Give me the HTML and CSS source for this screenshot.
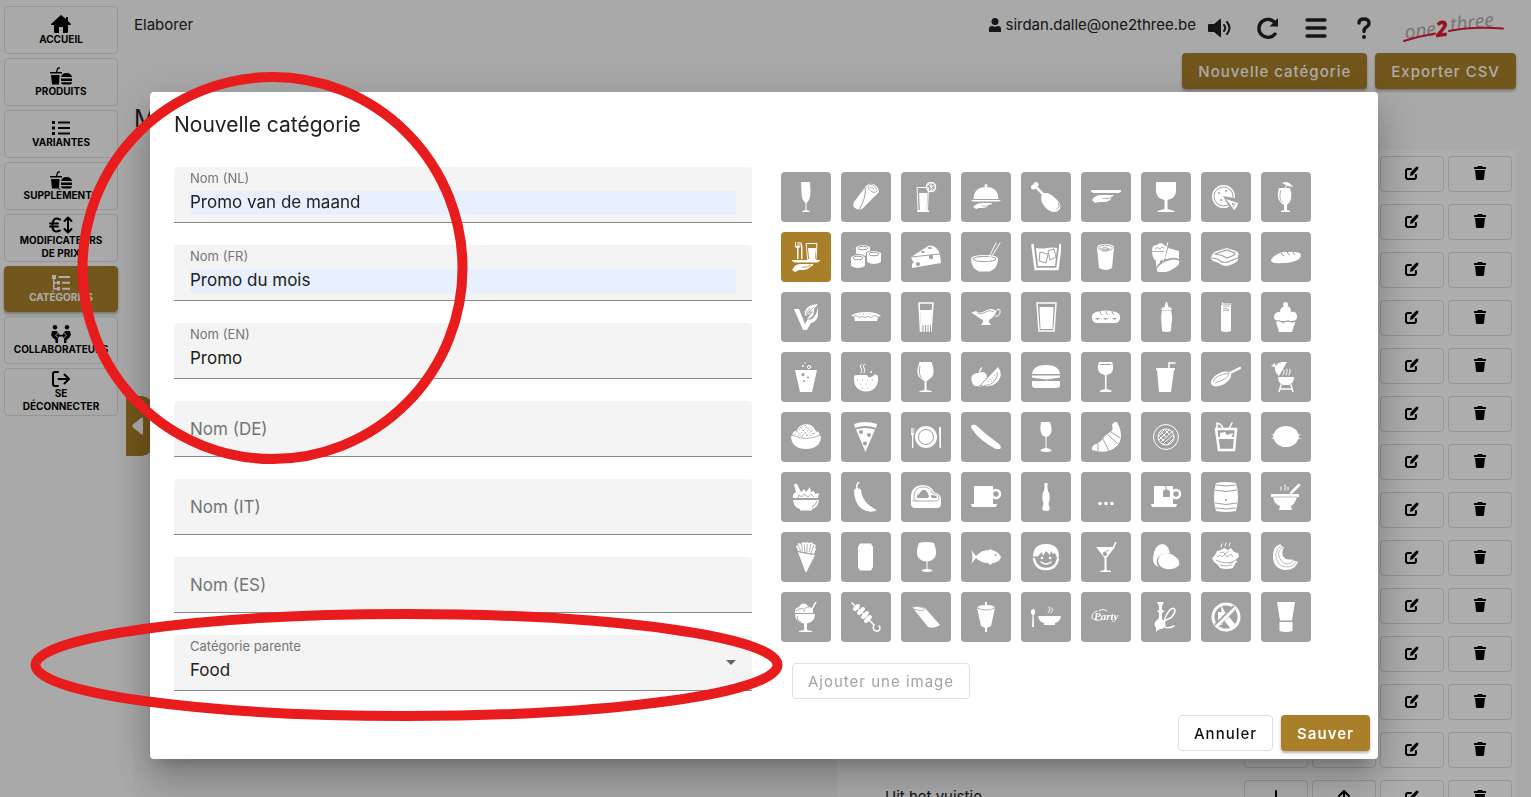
FILE: index.html
```html
<!DOCTYPE html>
<html lang="fr">
<head>
  <meta charset="UTF-8">
  <meta name="viewport" content="width=device-width, initial-scale=1.0">
  <title>Catégories</title>
  <link rel="stylesheet" href="styles.css">
</head>
<body>
  <div class="app">
    <nav class="sidebar">
      <a class="nav-item" href="#">
        <svg width="20" height="18" viewBox="0 0 20 18"><path d="M10 0L0 9q0 1 1 1h2v7q0 1 1 1h4v-6h4v6h4q1 0 1-1v-7h2q1 0 1-1l-3-3V2h-2v2z"/></svg>
        Accueil
      </a>
      <a class="nav-item" href="#">
        <svg width="22" height="18" viewBox="0 0 22 18"><path d="M0 5h6l1-4 3-1v1.300L8 2.200 7.300 5H12v1.500H0zM1 8h8.500L9 17.500H2zM11 10q1-4 5.500-4t5.500 4zM11 11.500h11V14H11zM11 15.300h11q0 2.200-2 2.200h-7q-2 0-2-2.200z"/></svg>
        Produits
      </a>
      <a class="nav-item" href="#">
        <svg width="18" height="16" viewBox="0 0 18 16"><path d="M0 1h3v3H0zM6 1.500h12v2H6zM0 6.500h3v3H0zM6 7h12v2H6zM0 12h3v3H0zM6 12.500h12v2H6z"/></svg>
        Variantes
      </a>
      <a class="nav-item" href="#">
        <svg width="22" height="18" viewBox="0 0 22 18"><path d="M0 5h6l1-4 3-1v1.300L8 2.200 7.300 5H12v1.500H0zM1 8h8.500L9 17.500H2zM11 10q1-4 5.500-4t5.500 4zM11 11.500h11V14H11zM11 15.300h11q0 2.200-2 2.200h-7q-2 0-2-2.200z"/></svg>
        Suppléments
      </a>
      <a class="nav-item" href="#">
        <svg class="line" width="24" height="18" viewBox="0 0 24 18"><path d="M11 3.500Q4 0 3.500 9T11 14.500M1 7.500h8M1 10.500h8M19 2v14M15.500 5L19 1.500 22.500 5M15.500 13l3.500 3.500 3.500-3.500"/></svg>
        Modificateurs<br>de prix
      </a>
      <a class="nav-item active" href="#">
        <svg width="18" height="16" viewBox="0 0 18 16"><path d="M0 0h4v4H2.500v3H5V6h3v3.500H5v-1H2.500V13H5v-1h3v3.500H5v-1H1V4H0zM6.500 1H18v2H6.500zM10 6.800h8v2h-8zM10 12.800h8v2h-8z"/></svg>
        Catégories
      </a>
      <a class="nav-item" href="#">
        <svg width="20" height="18" viewBox="0 0 20 18"><circle cx="4" cy="2.200" r="2.200"/><circle cx="16" cy="2.200" r="2.200"/><path d="M1 6h5l1 2-3 2.500L7 13v5H4.500v-3L2 13 0 10zM19 6h-5l-1 2 3 2.500-3 2.500v5h2.500v-3l2.500-2 2-3zM5 10.500L8 8v1.700h4V8l3 2.500-3 2.500v-1.600H8V13z"/></svg>
        Collaborateurs
      </a>
      <a class="nav-item" href="#">
        <svg class="line" width="18" height="16" viewBox="0 0 18 16"><path d="M6 1H3Q1 1 1 3v10q0 2 2 2h3M6.500 8H17M12.500 3.500L17 8l-4.500 4.500"/></svg>
        Se<br>déconnecter
      </a>
      <button class="sidebar-toggle" type="button" aria-label="Replier le menu">
        <svg width="11" height="18" viewBox="0 0 11 18"><path d="M11 1v16q-1 1-2 0L.5 10q-1-1 0-2L9 1q1-1 2 0z"/></svg>
      </button>
    </nav>

    <main class="main">
      <header class="topbar">
        <span class="page-name">Elaborer</span>
        <span class="user">
          <svg width="12" height="14" viewBox="0 0 12 14"><circle cx="6" cy="3.500" r="3.500"/><path d="M0 14v-3q0-3 3-3 3 1.500 6 0 3 0 3 3v3z"/></svg>
          sirdan.dalle@one2three.be
        </span>
        <button class="icon-btn" type="button" aria-label="Son">
          <svg width="24" height="20" viewBox="0 0 24 20"><path d="M1 6h5l6-5q1-.7 1 .500v17q0 1.200-1 .500L6 14H1q-1 0-1-1V7q0-1 1-1z"/><path class="line" d="M16 7q2.500 3 0 6M19 4q5 6 0 12"/></svg>
        </button>
        <button class="icon-btn" type="button" aria-label="Actualiser">
          <svg width="24" height="24" viewBox="0 0 24 24"><path d="M22 2v8.500h-8.500z"/><path class="line thick" d="M19.500 7.500A9 9 0 1 0 19 18"/></svg>
        </button>
        <button class="icon-btn" type="button" aria-label="Menu">
          <svg width="22" height="20" viewBox="0 0 22 20"><path class="line thick" d="M2 2h18M2 10h18M2 18h18"/></svg>
        </button>
        <button class="icon-btn" type="button" aria-label="Aide">
          <svg width="14" height="22" viewBox="0 0 14 22"><path class="line thick" d="M2 6Q2 2 7 2t5 4q0 2.500-2.500 4T7 14.500"/><circle cx="7" cy="20" r="2"/></svg>
        </button>
        <svg class="logo" width="104" height="40" viewBox="0 0 104 40">
          <g transform="rotate(-7 52 24)">
            <text class="logo-grey" x="3" y="26">one</text>
            <text class="logo-red" x="34" y="28">2</text>
            <text class="logo-grey" x="49" y="24">three</text>
          </g>
          <path d="M2 34Q18 29 33 26.500M47 24Q70 19 101 21.500"/>
        </svg>
      </header>
      <div class="toolbar">
        <button class="btn primary" type="button">Nouvelle catégorie</button>
        <button class="btn primary" type="button">Exporter CSV</button>
      </div>
      <h1>M</h1>
      <div class="panels">
        <div class="panel preview"></div>
        <div class="panel"><table class="list"><tbody id="rows"></tbody></table></div>
      </div>
    </main>
  </div>

  <div class="backdrop">
    <form class="dialog" role="dialog" aria-labelledby="dialog-title">
      <h2 id="dialog-title">Nouvelle catégorie</h2>
      <div class="dialog-body">
        <div class="fields">
          <div class="field filled auto">
            <label for="nl">Nom (NL)</label>
            <input id="nl" type="text" value="Promo van de maand">
          </div>
          <div class="field filled auto">
            <label for="fr">Nom (FR)</label>
            <input id="fr" type="text" value="Promo du mois">
          </div>
          <div class="field filled">
            <label for="en">Nom (EN)</label>
            <input id="en" type="text" value="Promo">
          </div>
          <div class="field">
            <label for="de">Nom (DE)</label>
            <input id="de" type="text">
          </div>
          <div class="field">
            <label for="it">Nom (IT)</label>
            <input id="it" type="text">
          </div>
          <div class="field">
            <label for="es">Nom (ES)</label>
            <input id="es" type="text">
          </div>
          <div class="field filled">
            <label for="parent">Catégorie parente</label>
            <select id="parent"><option>Food</option></select>
            <svg class="arrow" width="10" height="5" viewBox="0 0 10 5"><path d="M0 0h10L5 5z"/></svg>
          </div>
        </div>
        <div class="images">
          <div class="tiles" id="tiles"></div>
          <button class="btn outlined" type="button" disabled>Ajouter une image</button>
        </div>
      </div>
      <div class="dialog-actions">
        <button class="btn outlined" type="button">Annuler</button>
        <button class="btn primary strong" type="submit">Sauver</button>
      </div>
    </form>
  </div>

  <svg class="marks" aria-hidden="true">
    <ellipse cx="272.500" cy="268" rx="190" ry="191"/>
    <ellipse cx="406.500" cy="665" rx="371" ry="51"/>
  </svg>

  <script src="script.js"></script>
</body>
</html>
```

FILE: styles.css
```css
* {
  box-sizing: border-box;
}
body {
  margin: 0;
  height: 100vh;
  overflow: hidden;
  font-family: Inter, sans-serif;
  font-size: 15px;
  color: #212121;
  background: #fafafa;
}
button {
  font-family: inherit;
  cursor: pointer;
}
svg {
  display: block;
  flex: none;
  fill: currentColor;
}
.line {
  fill: none;
  stroke: currentColor;
  stroke-width: 2;
  stroke-linecap: round;
  stroke-linejoin: round;
}
.thick {
  stroke-width: 3.4;
}
.app {
  display: flex;
}

/* left menu */
.sidebar {
  position: relative;
  flex: none;
  display: flex;
  flex-direction: column;
  gap: 4px;
  width: 122px;
  padding: 6px 4px;
}
.nav-item {
  display: flex;
  flex-direction: column;
  align-items: center;
  justify-content: center;
  height: 48px;
  border: 1px solid #dcdcdc;
  border-radius: 4px;
  font-size: 10px;
  line-height: 13px;
  font-weight: 700;
  text-align: center;
  text-decoration: none;
  text-transform: uppercase;
  color: #000;
}
.nav-item.active {
  height: 46px;
  background: #a97f29;
  border-color: #a97f29;
  color: #fff;
  box-shadow: 0 2px 3px rgba(0,0,0,0.3);
}
.sidebar-toggle {
  position: absolute;
  left: 126px;
  top: 396px;
  display: flex;
  align-items: center;
  width: 30px;
  height: 60px;
  padding: 0 6px;
  border: none;
  border-radius: 0 16px 16px 0;
  background: #a97f29;
  color: #fff;
}

/* page */
.main {
  flex: 1;
  padding: 0 15px 0 12px;
}
.topbar {
  display: flex;
  align-items: center;
  height: 53px;
}
.page-name {
  flex: 1;
  padding-bottom: 4px;
}
.user {
  display: flex;
  align-items: center;
  gap: 4px;
  padding-bottom: 4px;
}
.icon-btn {
  display: flex;
  align-items: center;
  justify-content: center;
  width: 48px;
  height: 48px;
  padding: 2px 0 0;
  border: none;
  background: none;
  color: #212121;
}
.logo {
  margin: 0 10px 0 14px;
}
.logo path {
  fill: none;
  stroke: #e01b36;
  stroke-width: 2;
  stroke-linecap: round;
}
.logo text {
  font-family: "Open Sans", sans-serif;
  font-style: italic;
}
.logo-grey {
  font-size: 19px;
  font-weight: 400;
  fill: #aaa;
}
.logo-red {
  font-size: 22px;
  font-weight: 800;
  fill: #e01b36;
}
.toolbar {
  display: flex;
  justify-content: flex-end;
  gap: 8px;
}
.btn {
  height: 36px;
  padding: 0 15px;
  border: 1px solid transparent;
  border-radius: 4px;
  font-size: 15px;
  font-weight: 500;
  letter-spacing: 1px;
}
.btn.primary {
  background: #a97f29;
  color: #fff;
  box-shadow: 0 2px 3px rgba(0,0,0,0.3);
}
.btn.outlined {
  background: #fff;
  border-color: #dfdfdf;
  color: #111;
}
.btn.outlined:disabled {
  color: #a3a3a3;
  font-weight: 400;
}
.btn.strong {
  font-weight: 600;
}
h1 {
  margin: 14px 0 16px;
  font-size: 24px;
  line-height: 31px;
  font-weight: 400;
}
.panels {
  display: grid;
  grid-template-columns: 1fr 679px;
}
.panel {
  background: #fff;
  padding-right: 2px;
}
.panel.preview {
  background: #f7f7f7;
}
.list {
  width: 100%;
  border-collapse: collapse;
}
.list td {
  width: 68px;
  padding: 6px 2px;
}
.list .name {
  width: auto;
  padding: 0 0 4px 48px;
}
.row-btn {
  display: flex;
  align-items: center;
  justify-content: center;
  width: 64px;
  height: 36px;
  padding: 0 0 2px;
  border: 1px solid #dcdcdc;
  border-radius: 4px;
  background: none;
  color: #000;
}

/* dialog */
.backdrop {
  position: fixed;
  inset: 0;
  padding: 92px 153px 0 150px;
  background: rgba(0,0,0,0.32);
}
.dialog {
  background: #fff;
  border-radius: 4px;
  box-shadow: 0 11px 15px -7px rgba(0,0,0,0.2), 0 24px 38px 3px rgba(0,0,0,0.14), 0 9px 46px 8px rgba(0,0,0,0.12);
}
h2 {
  margin: 0;
  padding: 17px 24px 26px;
  font-size: 21px;
  line-height: 32px;
  font-weight: 400;
}
.dialog-body {
  display: grid;
  grid-template-columns: 1fr 1fr;
  gap: 24px;
  padding: 0 24px 8px;
}
.fields {
  display: flex;
  flex-direction: column;
  gap: 22px;
}
.field {
  display: grid;
  height: 56px;
  padding: 0 16px;
  background: #f4f4f4;
  border-bottom: 1px solid #8a8a8a;
  border-radius: 4px 4px 0 0;
}
.field label,
.field input,
.field select,
.field .arrow {
  grid-area: 1 / 1;
}
.field label {
  align-self: center;
  font-size: 17px;
  color: #747474;
}
.field.filled label {
  align-self: start;
  padding-top: 3px;
  font-size: 13px;
  line-height: 16px;
}
.field input,
.field select {
  align-self: end;
  width: 100%;
  height: 24px;
  margin-bottom: 7px;
  padding: 0 0 2px;
  border: none;
  background: none;
  appearance: none;
  font-family: inherit;
  font-size: 17px;
  color: #212121;
}
.field.auto input {
  background: #e8f0fe;
}
.field .arrow {
  align-self: center;
  justify-self: end;
  color: #666;
}
.tiles {
  display: flex;
  flex-wrap: wrap;
  margin-bottom: 16px;
}
.tile {
  --tile: #a0a0a0;
  width: 50px;
  height: 50px;
  margin: 5px;
  padding: 10px;
  border: none;
  border-radius: 4px;
  background: var(--tile);
  color: #fff;
}
.tile.selected {
  --tile: #a97f29;
}
/* l = white line, k = cut-out, c = cut-out line */
.tile .l {
  fill: none;
  stroke: #fff;
  stroke-width: 1.5;
  stroke-linecap: round;
}
.tile .thin {
  stroke-width: 1;
}
.tile .fat {
  stroke-width: 2.5;
}
.tile .k {
  fill: var(--tile);
}
.tile .c {
  fill: none;
  stroke: var(--tile);
}
.tile text {
  font: italic 700 11px "Liberation Serif", serif;
}
.images > .btn {
  margin-left: 16px;
}
.dialog-actions {
  display: flex;
  justify-content: flex-end;
  gap: 8px;
  padding: 8px;
}

/* red circles over the page */
.marks {
  position: fixed;
  inset: 0;
  width: 100%;
  height: 100%;
  fill: none;
  stroke: #e81c1c;
  stroke-width: 10;
  pointer-events: none;
}
```

FILE: script.js
```js
const hand = '<path d="M1 28q3-6 8-6h13q1 1-1 2l-2 1q-2 3-7 3H8l-4 2z"/><path class="c" stroke-width=".7" d="M11 25h5l4-2"/>';

// 30x30 drawings, in display order
const icons = [
  ['Flûte', '<path d="M10 0h9l.5 10q0 8-4 11v7l3 1v1h-7v-1l3-1v-7q-4-3-4-11z"/>'],
  ['Wrap', '<path d="M15 4q4-4 9-1 4 3 4 7L11 27q-3 2-7-1-3-2-1-6z"/><ellipse class="c" stroke-width=".8" cx="21.500" cy="6.500" rx="5" ry="3" transform="rotate(40 21.500 6.500)"/><path class="c" d="M14 5Q16 14 8 28"/><path class="c" stroke-width=".8" d="M19 6q2-2 4 1"/>'],
  ['Cocktail', '<path class="l thin" d="M6.500 5.500h11l-1 23h-9z"/><path d="M8 11h8.500l-1 18H9z"/><path d="M6 28.500h12V30H6z"/><circle class="l" cx="20" cy="5" r="4.500"/><path class="l thin" d="M20 5V1M20 5l4-2M20 5l3 3M20 5l-3-3M20 5v4"/>'],
  ['Plat du jour', '<circle cx="15" cy="3.500" r="1.500"/><path d="M2.500 17Q3 5 15 5t12.500 12zM0 18h30l-2 1.500H2z"/><path d="M2 25q4-4 9-4h10q1 1-3 2-2 3-7 3H8l-3 1z"/><path class="c" stroke-width=".7" d="M11 24h5l3-1"/>'],
  ['Poulet', '<path class="l fat" d="M4 4l9 9"/><circle cx="5" cy="2.500" r="2.500"/><circle cx="2.500" cy="5" r="2.500"/><path d="M11 12q6-3 13 4 9 8 3 13-6 3-12-3-7-7-4-14z"/><path class="c" d="M27.500 21q2 4-2 6.500"/>'],
  ['Service', '<path d="M0 8h30v1.500L28 11H2L0 9.500z"/><path d="M1 18q3-5 9-5h13l-2 2q-2 5-8 5H8l-4 1z"/><path class="c" stroke-width=".8" d="M12 16.500h6l4-2"/>'],
  ['Verre', '<path d="M5 0h20v9q0 7-8.500 9v9l7 2v1h-17v-1l7-2v-9Q5 16 5 9z"/>'],
  ['Pizza', '<circle cx="12.500" cy="14.500" r="11.500"/><circle class="c" cx="12.500" cy="14.500" r="9.500"/><path class="k" d="M12 14l16 3-8 11z"/><path d="M15 17l12 4q-1 5-4 7z"/><circle class="k" cx="22" cy="22" r="1"/><circle class="k" cx="8" cy="11" r="1"/><circle class="k" cx="15" cy="9" r="1"/><circle class="k" cx="10" cy="18" r="1"/><path class="c" stroke-width=".8" d="M24.500 21q-.500 3-3 4.500"/>'],
  ['Tropical', '<path d="M8 6h11q4 12-3 17v5l3 1v1h-9v-1l3-1v-5Q4 18 8 6z"/><path class="c" stroke-width=".8" d="M10 8q-3 9 2 13"/><path class="l thin" d="M14 6l2-3"/><path d="M11 1q6-3 11 4l-5-1z"/>'],

  ['Formule', '<path d="M4 0v5l2 1v11h1.500V6l2-1V0h-1v4H7.500V0h-1v4H5V0zM10 0q2 3 1.500 9v8H10zM1 18h28v1l-3 1.500H4L1 19z"/><path class="l thin" d="M15.500 1.500h10.500l-1 16h-8z"/><path d="M17 6h8l-1 11h-6z"/>' + hand],
  ['Sushi', '<path d="M5 5q7-4 14 0v7q-7 4-14 0zM0 15q7-4 14 0v9q-7 4-14 0zM16 11q7-4 14 0v9q-7 4-14 0z"/><g class="c"><ellipse cx="12" cy="6" rx="5" ry="1.800"/><ellipse cx="7" cy="16" rx="5" ry="1.800"/><ellipse cx="23" cy="12" rx="5" ry="1.800"/><path d="M0 13.500q7-3 14.500 1v8M15.500 21V10.500l4-1.500"/></g>'],
  ['Fromage', '<path d="M0 15L18 3.500q9 0 11 9.500l1 8L1 26v-4q3-2 0-4z"/><path class="c" d="M0 15l29-3"/><circle class="k" cx="20" cy="15" r="2.200"/><circle class="k" cx="7" cy="22" r="2"/><ellipse class="k" cx="12" cy="10" rx="2" ry="1"/><ellipse class="k" cx="19" cy="6" rx="2" ry="1"/>'],
  ['Bol asiatique', '<path d="M0 17q0-4 13.500-4T27 17q0 9-8 12.500H8Q0 26 0 17z"/><ellipse class="c" cx="13.500" cy="17" rx="11.500" ry="2.600"/><path class="l thin" d="M16 19l9-18M18 19L29 1"/>'],
  ['Whisky', '<path class="l fat" d="M1.500 3l3 24h22l3-24"/><path d="M5 6q6 1 11 0t10 0l-2 18H7z"/><g class="c"><path d="M9 10l8 2-2 9-7-2zM17 9l6-2 2 8-6 3z"/></g>'],
  ['Gobelet', '<path d="M6 6q0-4 8.500-4T23 6l-2 20q-6 4-13 0z"/><g class="c" stroke-width=".8"><ellipse cx="14.500" cy="6" rx="7" ry="2.800"/><path d="M9 7q5-3 10 0M11 8q3-2 7 0M12 10l2-2 2 2"/></g>'],
  ['Desserts', '<path d="M1 9q0-7 5-6 4-4 7 0 4 2 2 6l-1 7-5 3v5l3 1H5V19Q1 16 1 9z"/><path d="M17 6l11 3v9l-14-1z"/><ellipse class="k" cx="17" cy="23.500" rx="13" ry="6.500" transform="rotate(-22 17 23.500)"/><ellipse cx="17" cy="24" rx="12" ry="5" transform="rotate(-22 17 24)"/><path class="l thin" d="M17 0l-5 19"/><path class="c" stroke-width=".8" d="M1 9.500h12M4 7q2-3 5 0 1-3 4-1"/>'],
  ['Sandwich', '<path d="M1 13q1-3 5-4l10-3 9 3q4 2 2 5v4q-1 3-11 6-5 0-8-3l-6-2q-3-2-1-6z"/><g class="c" stroke-width="1.200"><path d="M4 12l12-4 8 3q1 2-8 5-4-2-6-3-4 0-6-1z"/><path d="M1 16q5 0 8 3 5 3 10 0l8-3"/></g>'],
  ['Pain', '<path d="M0 18q2-4 7-6 4-3 9-2 13-1 14 3 0 4-6 6-5 2-13 2Q0 22 0 18z"/><path class="c" d="M10 10q0 3 3 4M16 9q0 3 3 4M22 9q0 2 2 4"/>'],

  ['Végétarien', '<path d="M3 7h5l6 15 3-5q3 2 6-2 4-5 4-13Q16 3 14 9q-1 4 1 5l7-5-6 8q8-1 7-10l4-5v12q-2 6-7 7l-4 7h-4z"/><path class="c" stroke-width=".8" d="M15 13l8-8M18 6v5M16 8v5M22 10h-4"/>'],
  ['Tarte', '<path d="M0 14q4-4 15-4t15 4l-3 .8-1 4.200H4l-1-4.200z"/><path class="c" stroke-width=".8" d="M2 14.500l3-1 3 2 3-1 3 1 3-1 3 1 3-2 4 1"/><path class="c" stroke-width=".6" stroke-dasharray="1.500 2" d="M8 12h14"/>'],
  ['Long drink', '<path class="l" d="M8 1h14l-2 28H9.500z"/><path d="M9 8h12l-1.500 21h-9z"/><path class="c" d="M12 23v7M14.500 23v7M17 23v7M19.500 23v7"/>'],
  ['Sauce', '<path d="M0 11l5-2q3 3 9 0 7-4 11 0-1 6-7 9v2l2 3H10l2-3v-2Q5 14 3 12z"/><path class="l thin" d="M24 11l3-4q3 0 2 4-1 4-5 3"/><path class="c" stroke-width=".8" d="M6 11q5 2 9-1t8 0"/>'],
  ['Verre d’eau', '<path class="l" d="M6 1h19l-2 28H8z"/><path d="M8.500 5h14l-1 22h-12z"/>'],
  ['Petit pain', '<path d="M1 16q-1-4 4-6 10-3 20 0 5 2 4 6 0 5-6 5H7q-6 0-6-5z"/><path class="c" d="M9 9q0 3 2 4M15 9q0 3 2 4M21 9q0 3 2 4"/><path class="k" d="M4 16h5l-2.500 2zM12 16h5l-2.500 2zM21 16h5l-2.500 2z"/>'],
  ['Ketchup', '<path d="M15 0h1l1.500 5 3 1v2h-10V6l3-1zM11 8.500h9q2 8 .5 13L20 29q-4.500 2-9 0l-.5-8q-1-6 .5-12.500z"/>'],
  ['Mojito', '<path d="M10 3h10v26q-5 2-10 0z"/><path class="l thin" d="M11 0l2 5M12 2h8"/><path class="c" stroke-width=".8" d="M12 4h7M12 7q3-2 6 1M12 9q3-2 6 0"/>'],
  ['Cupcake', '<circle cx="14.500" cy="2.500" r="2.500"/><path d="M9 10q0-5 5.500-6T20 10q6-1 6 5 0 4-5 4H8q-5 0-5-4 0-5 6-5z"/><path d="M5 20q2-2 5 0 2 1 4.500 0t5 0q2 1 5-.5L21 30H8z"/><path class="c" d="M5 19q3-1 5 .5t4.500 0 5 0 5-1"/>'],

  ['Soda', '<path d="M4 8h22l-5 22H9z"/><circle class="k" cx="12" cy="12.500" r="1.600"/><circle class="k" cx="17" cy="15.500" r="1"/><circle class="k" cx="13" cy="19" r="1"/><circle class="l thin" cx="18" cy="5" r="1.600"/><circle cx="12" cy="4" r="1"/><circle cx="14" cy="1" r=".7"/>'],
  ['Soupe', '<path d="M3 14q1-1 3-1h10q1 3 4 2t4-3l3 2q1 15-12 15.500Q2 29 3 14z"/><path class="l thin" d="M11 2q-3 2-1 4t0 5M14 2q-3 2-1 4t0 5"/><path class="c" stroke-width=".8" stroke-dasharray="1 4" d="M6 18h18M9 22h14M11 26h9"/><circle cx="20" cy="10" r="1"/>'],
  ['Vin rouge', '<path d="M8.500 0h12q5 13-2 17-2 2-3 2v9l5 1v1h-12v-1l5-1v-9q-1 0-3-2-7-4-2-17z"/><path class="c" d="M9 4q-2 9 2 12"/>'],
  ['Fruits', '<path d="M7 11q8-3 9 4 0 6-4 9-2 1-5 0-5 1-6-4-3-8 6-9z"/><path class="l" d="M8.500 9.500l2-3.500"/><path class="k" d="M8 24L28 3l3 10-8 14z"/><path d="M10 23L27 5q5 7 1 13-7 9-18 5z"/><path class="c" stroke-width=".8" d="M13 23.500q12 0 14-13"/><path class="c" stroke-dasharray="1 2" d="M17 20l9-9M20 20l6-5"/>'],
  ['Burger', '<path d="M1 12Q2 3 15 3t14 9zM1 13.500h28v2l-13 3-15-3zM1 19h28v4q0 3-4 3H5q-4 0-4-3z"/><path class="c" d="M1 18q6-2 14 0 8-1 14-2"/>'],
  ['Vin blanc', '<path d="M8 0h13q4 11-5.500 13v14l5 1.500V30H9v-1.500l5-1.500V13Q4 11 8 0z"/><path class="c" d="M9 2.500h11"/>'],
  ['Boisson froide', '<path d="M5 6h19v2h-1l-3 22H8L6 8H5z"/><path class="l" d="M18 6V1h6"/>'],
  ['Poêle', '<ellipse cx="10" cy="17" rx="11" ry="6" transform="rotate(-28 10 17)"/><path class="l fat" d="M19 11l10-5"/><path class="c" stroke-width=".8" d="M2 20q2-7 16-9-1 6-14 10"/>'],
  ['Barbecue', '<path d="M4 4q4-5 12-4L8 14Q3 10 4 4z"/><path d="M0 4l4-3v4z"/><path d="M7 15h16q0 6-5 8h-6q-5-2-5-8z"/><path class="l" d="M10 23l-2 7M20 23l2 7M9 27h12"/><path class="l thin" d="M12 13q2-3 1-5M15 13q2-4 1-6M18 13q2-3 1-6"/>'],

  ['Riz', '<path d="M0 14h30q0 9-8 12-7 2-14 0-8-3-8-12z"/><path d="M1 14q0-4 5-6 2-5 9-6 7 0 9 6 5 2 5 6-14 6-28 0z"/><path class="c" stroke-width=".8" stroke-dasharray="2 1.500" d="M3 13q5-7 12-10M7 14l10-10M11 14l10-9M15 14l8-7M19 14l7-5M5 8l6 7M9 5l8 9M14 3l9 10"/><path class="c" stroke-width=".8" d="M1 13q14 7 28 0"/>'],
  ['Part de pizza', '<path d="M3 2q11-4 23 0l-1 4Q14 2 4 6zM5 7.500q9-3 19 0L14.500 30z"/><circle class="k" cx="10" cy="10" r="2"/><circle class="k" cx="18" cy="13" r="2"/><circle class="k" cx="14" cy="21.500" r="2"/>'],
  ['Assiette', '<circle cx="15" cy="15" r="11"/><circle class="c" cx="15" cy="15" r="7.500"/><path d="M0 6h.7v5h.6V6H2v5h.6V6h.7v6l-1 2v12H1V14l-1-2zM28 5q2-1 2 2v19h-1.500z"/>'],
  ['Saucisse', '<path d="M1 3q3-1 5 1l9 8 13 10q3 3 1 5h-4Q9 19 1 7q-2-2 0-4z"/>'],
  ['Vin doux', '<path d="M10 0h9q3 8 .500 12-1 2-4 3v11q5 1 5 3-6 2-11 0 0-2 5-3V15q-3-1-4-3-2-4-.500-12z"/>'],
  ['Croissant', '<path d="M21 3q2-4 5-3 8 15 0 24-10 9-25 4-1-5 5-6l5-4q3-5 7-7 5-2 3-8z"/><path class="c" d="M20 10l9 6M12 17l6 12M17 13l10 9M7 22v7"/>'],
  ['Spaghetti', '<g class="l thin"><circle cx="15" cy="15" r="12.500"/><circle cx="15" cy="15" r="8"/><path d="M8 14l5-6M8 18l10-10M10 20L22 9M12 22l10-9M17 22l5-5M10 10l5 5M14 8l4 4M9 15l4 4"/></g>'],
  ['Cocktail glacé', '<path class="l fat" d="M5 7h20l-2 21H8z"/><path class="l" d="M6 1v5M6 1q5 1 6 6M21 1l-3 6"/><path d="M7 15h17v2H7zM9 11l5-1 2 3 6-2-1 4H9z"/>'],
  ['Rôti', '<ellipse cx="15" cy="14.500" rx="12.500" ry="10.500"/><path d="M0 12l3 2.500L0 17l5-1v-3zM30 12l-3 2.500 3 2.500-5-1v-3z"/>'],

  ['Salade', '<path d="M2 18h26q-1 8-7 9v1.500H9V27q-6-1-7-9z"/><path d="M2 16q-1-4 3-6L3 3q1-2 3-1l4 8 3-3 2 3 4-5 1 5 3-1 1 3 4-1-1 5z"/><path class="c" stroke-width=".8" d="M7 16l1-3 3 2 2-3 4 3 3-3 3 3"/><path class="c" d="M21 25q4-2 5-6"/>'],
  ['Piment', '<path class="l" d="M8 0Q5 2 6 7"/><path d="M3 8q4-4 7 0 1 13 16 20-6 4-15-1Q3 21 3 8z"/>'],
  ['Steak', '<path d="M0 13Q1 4 11 3q9 0 12 7 7 2 7 7v5q0 4-4 4H4q-4 0-4-4z"/><path class="c" stroke-width=".8" d="M1 18q2 2 5 1h19q4-1 3-4-1-3-7-4-1-6-9-6-8 0-9 8-1 5 3 6"/><path class="k" d="M6 14q2-7 8-6 2 1 4 6 0 2-3 2H8q-3 0-2-2zM20 13q6 0 6 3h-4q-3-1-2-3z"/><path class="l" d="M7 12l3-4"/>'],
  ['Café', '<path d="M3 4h19v18H3zM0 22h26l-1 3H1z"/><circle class="l fat" cx="25" cy="12" r="4"/>'],
  ['Bouteille', '<path d="M13.500 1h3v5q0 3 2 6v6l-1 4 1 3v3q-3.500 2-7 0v-3l1-3-1-4v-6q2-3 2-6z"/>'],
  ['Autre', '<circle cx="9" cy="21.500" r="1.800"/><circle cx="15" cy="21.500" r="1.800"/><circle cx="21" cy="21.500" r="1.800"/>'],
  ['Thé', '<path d="M3 4h19v18H3zM0 22h26l-1 3H1z"/><circle class="l fat" cx="25" cy="12" r="4"/><path class="k" d="M12 9l3-2 4 2v6h-7z"/><path class="c" d="M15 4v5"/>'],
  ['Fût', '<path d="M5 1q10-2 20 0 4 14 0 28-10 2-20 0-4-14 0-28z"/><path class="c" d="M5 3q10 2 20 0M4 8q11 3 22 0M4 21q11 3 22 0M5 26q10 2 20 0"/><circle class="k" cx="15" cy="18" r="1"/>'],
  ['Potage', '<path d="M0 12h28v3h-2q-2 7-6 9l1 4H8l1-4q-6-2-7-9H0z"/><path class="c" stroke-width=".7" d="M2 15h24"/><path class="l fat" d="M20 11l8-8"/><path class="l thin" d="M10 5v3M14 3v5M17 5v3"/>'],

  ['Frites', '<path d="M7 10q8 2 17 3l-8 16q-1 2-2 0z"/><path d="M7 9L5 4l2-1V1l3 1 2-2 2 1 2-1 2 1 3-1 1 2 3 1-1 3 1 1-2 5z"/><path class="c" stroke-width=".8" d="M10 9L7 3M12 9l-2-7M14 10l-1-8M16 10V2M18 10l2-8M20 11l3-8M7 9.500l16 3"/>'],
  ['Canette', '<path d="M9 1.500h11L22 5v20l-2 3.500H9L7 25V5z"/>'],
  ['Cognac', '<path d="M8 1q7.500-2 15 0 5 13-2 17-2 1-4.500 1.500V27q5 .5 5 2-6 2-11 0 0-1.500 5-2v-7.500Q12 19 10 18 3 14 8 1z"/>'],
  ['Poisson', '<path d="M0 8l5 6q5-6 13-6l1-1 2 1q7 2 9 7-1 5-8 6l-3 2-2-2q-7 0-12-5l-5 6q3-7 0-14z"/><circle class="k" cx="24.500" cy="13" r="1"/>'],
  ['Enfants', '<path class="l fat" d="M3 17q2 10 12 10t12-10"/><path d="M2 15Q2 2 15 2t13 13l-2 1-2-5-2 1-2-3-1 4-4-4-3 5-1-4-5 5-1-1z"/><circle cx="11" cy="16" r="1.300"/><circle cx="19" cy="16" r="1.300"/><path class="l" d="M10 20q5 4 10 0"/>'],
  ['Martini', '<path d="M5 5h19l-8.500 11v12l4.500 1v1H9v-1l4.500-1V16z"/><path class="l" d="M22 6l3-6"/><circle class="k" cx="14" cy="12" r="2"/><path class="c" stroke-width=".8" d="M12 11l6-3"/>'],
  ['Œufs', '<path d="M2 16Q3 3 11 2q6 0 8 9-10-1-13 6-1 5 2 8-6-1-6-9z"/><path d="M7 18q1-6 8-7 6 0 12 6 3 5-1 8-5 3-11 2-8-2-8-9z"/>'],
  ['Pâtes', '<path d="M5 20q10 3 20 0l-3 6q-7 2-13 0zM1 16l3-3 2-4 4-1 3-2 4 2 3-2 3 4 4 1 1 4-3 2 1 4q-8-2-11 2-6-2-8 0l-4-3z"/><path class="l thin" d="M10 5l1-3M14 4l1-3M18 4l1-3"/><path class="c" stroke-width=".8" d="M6 15l3-2 2 2 3-3 2 3 4-3 2 3M9 11l3-1 2 2 4-3M5 18q10 6 20 0M9 23q6 2 12 0"/>'],
  ['Macaroni', '<path d="M2 12Q3 4 9 2l4 4q-3 4-1 8 3 5 9 3l6 3q-4 9-14 8Q1 26 2 12z"/><g class="c" stroke-width=".7"><path d="M4.500 12q1-6 6-8M4.500 12q1 13 11 13 6 0 9-5M7.500 12q0-5 4.500-6M7.500 12q2 10 9 10 4 0 6-4M20 17l5 2"/></g>'],

  ['Coupe glacée', '<path d="M4 11q-1-5 4-6 2-5 7-3l3 3q5 1 4 6zM4 12h20q0 8-8 9.500V28l5 1v1H8v-1l5-1v-6.500Q4 20 4 12z"/><path class="l" d="M20 9l5-9"/><path class="c" stroke-width=".8" d="M6 14q0 5 4 6M13 10q0-5 5-5M5 9q4-4 8-2"/>'],
  ['Brochette', '<path class="l" d="M1 1l22 22q-2 5 2 6t4-4l-1-1"/><g class="l" style="stroke-width:4"><path d="M4 7l3-3M8 11l4-4M12 15l4-4M15 19l4-4"/></g>'],
  ['Penne', '<path d="M1 5q6-2 13 1l15 17q-5 4-12 2z"/><ellipse class="c" stroke-width=".8" cx="7.500" cy="6.500" rx="6" ry="1.800" transform="rotate(8 7.500 6.500)"/>'],
  ['Kebab', '<path d="M14 0h2v3q7 0 8 3l-4 18-4 2v4h-2v-4l-4-2L6 6q1-3 8-3z"/><path class="c" stroke-width=".8" d="M6 6q9 4 18 0"/>'],
  ['Soupe du jour', '<ellipse cx="2" cy="10" rx="2" ry="3"/><path d="M1.500 12h1L3 25H1zM7 14h23q-1 6-6 7v2H13v-2q-5-1-6-7z"/><path class="l thin" d="M17 11q3-2 1-6M20 11q3-2 1-5"/>'],
  ['Party', '<text x="3" y="18">Party</text><path class="l thin" d="M6 9Q0 11 1 16q3 3 9 2M8 9q4-3 8 0"/>'],
  ['Chicha', '<path d="M6 0h7l-2 4v4l3 1-3 2v6q4 4 2 9l-6 2-2 2v-4q-3-4 0-7l3-3v-5L6 9l2-1V4z"/><path class="l" d="M10 20Q24 16 24 8q-2-4-6 1-6 7-4 16 3 2 9-1"/>'],
  ['Sans alcool', '<circle class="l" style="stroke-width:3" cx="15" cy="15" r="13"/><path d="M10 3l4 7 5 6 5 6-4 5-9-11zM7 10h4v13H7z"/><path class="c" stroke-width="5" d="M5 24L24 5"/><path class="l" style="stroke-width:3" d="M6 24L24 6"/>'],
  ['Shot', '<path d="M6 0h18l-3 18.500H9zM8.500 20h13v9q-6.500 2-13 0z"/>']
];

const selected = 9;

document.getElementById('tiles').innerHTML = icons.map(([name, art], i) =>
  `<button type="button" class="tile${i === selected ? ' selected' : ''}" aria-label="${name}"><svg width="30" height="30" viewBox="0 0 30 30">${art}</svg></button>`
).join('');

const rowIcons = [
  ['Descendre', '<path class="line" d="M7 1v12M2 8l5 5 5-5"/>'],
  ['Monter', '<path class="line" d="M7 13V1M2 6l5-5 5 5"/>'],
  ['Modifier', '<path class="line" d="M6 3H3Q1 3 1 5v6q0 2 2 2h6q2 0 2-2V9"/><path d="M5 10l.5-3.500L11 1q1-1 2 0t0 2L8 9z"/>'],
  ['Supprimer', '<path d="M1 1h3l1-1h4l1 1h3v2H1zM2 4h10l-1 9q0 1-1 1H4q-1 0-1-1z"/>']
];

const names = new Array(13).fill('').concat('Uit het vuistje');

document.getElementById('rows').innerHTML = names.map(name =>
  `<tr><td class="name">${name}</td>` + rowIcons.map(([label, art]) =>
    `<td><button type="button" class="row-btn" aria-label="${label}"><svg width="14" height="14" viewBox="0 0 14 14">${art}</svg></button></td>`
  ).join('') + '</tr>'
).join('');
```
